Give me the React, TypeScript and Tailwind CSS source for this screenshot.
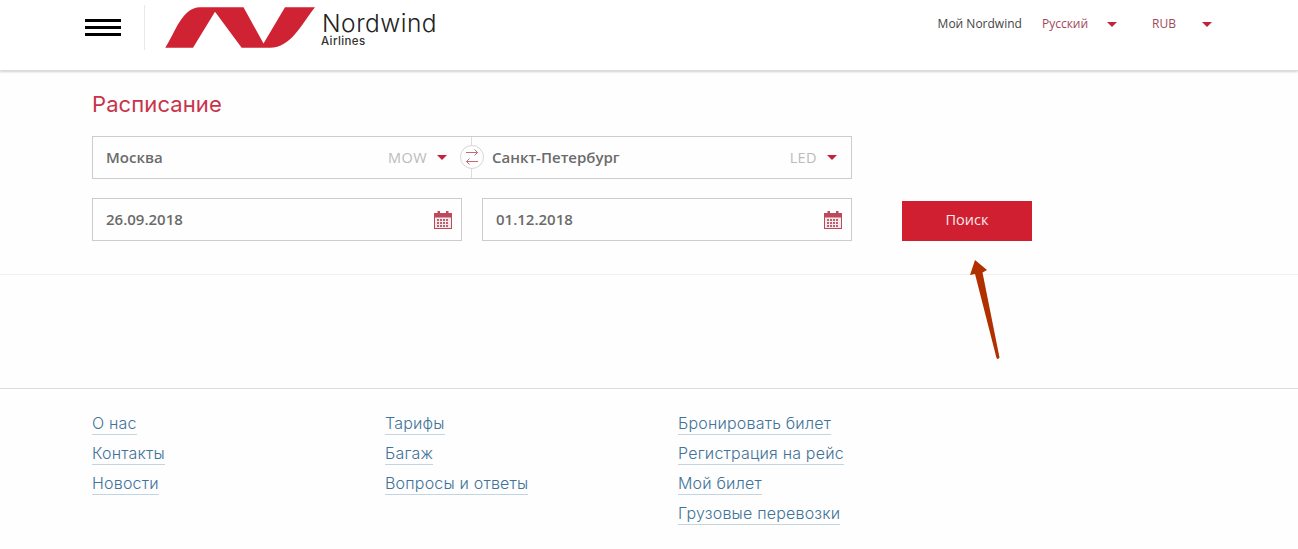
const sans = "font-['Open_Sans',sans-serif]";

function Caret({ className = "" }: { className?: string }) {
  return (
    <svg width="10" height="5" viewBox="0 0 10 5" className={className}>
      <path d="M0 0H10L5 5Z" fill="#c0243a" />
    </svg>
  );
}

function Logo() {
  return (
    <svg width="165" height="55" viewBox="0 0 165 55" className="shrink-0">
      <path
        d="M5.3 47.7C15 33 22 7.3 40 7.3H83.5L103.5 43.5L125 7.3H155C141 25 131 47.7 110 47.7H81.7L55 11.7L33 47.7Z"
        fill="#cf2232"
      />
    </svg>
  );
}

function CalendarIcon() {
  return (
    <svg width="18" height="18" viewBox="0 0 18 18">
      <rect x="0.5" y="2.5" width="17" height="15" fill="#f8eaec" stroke="#bd4a5a" />
      <rect x="0" y="2" width="18" height="4.5" fill="#bd4a5a" />
      <rect x="3.5" y="0" width="2.5" height="4.5" fill="#bd4a5a" />
      <rect x="12" y="0" width="2.5" height="4.5" fill="#bd4a5a" />
      <g fill="#b5636f">
        {[3, 6, 9, 12].map((x) =>
          [8, 11, 14].map((y) => <rect key={`${x}-${y}`} x={x} y={y} width="2" height="2" />)
        )}
      </g>
    </svg>
  );
}

function SwapIcon() {
  return (
    <svg width="14" height="14" viewBox="0 0 14 14" fill="none" strokeWidth="1" className="overflow-visible">
      <path d="M1 2.5H12.5M9.5 -0.5L12.5 2.5L9.5 5.5" stroke="#c46a78" />
      <path d="M13 11.5H1.5M4.5 8.5L1.5 11.5L4.5 14.5" stroke="#c46a78" />
    </svg>
  );
}

function PlaceField({ city, code, className }: { city: string; code: string; className: string }) {
  return (
    <div className={`flex items-center ${className} ${sans}`}>
      <span className="text-[15px] font-semibold text-[#6b6b6b]">{city}</span>
      <span className="ml-auto text-[14.5px] tracking-[0.4px] text-[#bbb]">{code}</span>
      <Caret className="ml-[10px]" />
    </div>
  );
}

function DateField({ value }: { value: string }) {
  return (
    <div className={`w-[370px] h-[43px] border border-[#ccc] flex items-center justify-between pl-[13px] pr-[9px] ${sans}`}>
      <span className="text-[15px] font-semibold text-[#6b6b6b]">{value}</span>
      <CalendarIcon />
    </div>
  );
}

const footerLinks = [
  ["О нас", "Контакты", "Новости"],
  ["Тарифы", "Багаж", "Вопросы и ответы"],
  ["Бронировать билет", "Регистрация на рейс", "Мой билет", "Грузовые перевозки"],
];

export default function App() {
  return (
    <div className="relative h-[549px] overflow-hidden bg-[#fefefe]">
      <header className="h-[71px] flex items-start pl-[85px] pr-[86px] bg-white border-b border-[#ddd] shadow-[0_1px_2px_rgba(0,0,0,0.18)]">
        <div className="mt-[19px] w-[36px] flex flex-col gap-[4px]">
          <div className="h-[3px] bg-black" />
          <div className="h-[3px] bg-black" />
          <div className="h-[3px] bg-black" />
        </div>
        <div className="ml-[23px] mt-[5px] w-px h-[45px] bg-[#e8e8e8]" />
        <div className="ml-[15px]">
          <Logo />
        </div>
        <div className="-ml-[3px] mt-[10px] flex flex-col">
          <span className="font-['Inter',sans-serif] text-[24.5px] leading-[26px] font-light text-[#222] tracking-[0.5px]">Nordwind</span>
          <span className="font-['Inter',sans-serif] text-[11.5px] leading-[10px] font-medium tracking-[0.4px] text-[#333] -ml-px">Airlines</span>
        </div>
        <div className={`ml-auto mt-[15px] h-[18px] flex items-center text-[12px] ${sans}`}>
          <span className="text-[#444]">Мой Nordwind</span>
          <span className="ml-[20px] text-[#a2475a]">Русский</span>
          <Caret className="ml-[19px]" />
          <span className="ml-[35px] text-[#a2475a]">RUB</span>
          <Caret className="ml-[26px]" />
        </div>
      </header>

      <main className="h-[204px] pt-[19px] px-[92px] border-b border-[#f0f0f0]">
        <h1 className="h-[28px] font-['Inter',sans-serif] text-[22px] leading-[28px] font-normal tracking-[0.1px] text-[#c9334a]">Расписание</h1>
        <div className="relative mt-[18px] w-[760px] h-[43px] border border-[#ccc] flex">
          <PlaceField city="Москва" code="MOW" className="w-[378px] shrink-0 pl-[13px] pr-[24px]" />
          <div className="w-px bg-[#ddd]" />
          <PlaceField city="Санкт-Петербург" code="LED" className="flex-1 pl-[20px] pr-[14px]" />
          <div className="absolute left-[367px] top-[8px] w-[24px] h-[24px] rounded-full border border-[#d5d5d5] bg-white flex items-center justify-center">
            <SwapIcon />
          </div>
        </div>
        <div className="mt-[19px] flex items-start">
          <DateField value="26.09.2018" />
          <div className="ml-[20px]">
            <DateField value="01.12.2018" />
          </div>
          <button className={`ml-[50px] mt-[3px] w-[130px] h-[40px] pb-[2px] bg-[#cf1f30] text-[#fbeaec] text-[14.5px] font-medium ${sans}`}>
            Поиск
          </button>
        </div>
      </main>

      <footer className="mt-[113px] border-t border-[#ddd] pt-[19px] pl-[92px] flex font-['Inter',sans-serif]">
        {footerLinks.map((col) => (
          <ul key={col[0]} className="w-[293px] flex flex-col gap-[4px]">
            {col.map((item) => (
              <li key={item} className="h-[26px]">
                <a className="inline-block h-[27px] leading-[30px] text-[16px] font-light tracking-[0.2px] text-[#3f7399] border-b border-[#c5d5e0]">
                  {item}
                </a>
              </li>
            ))}
          </ul>
        ))}
      </footer>

      <svg width="40" height="110" viewBox="0 0 40 110" className="absolute left-[965px] top-[255px]">
        <path d="M10 5L5 20L10 19L31.5 103Q33 105 34.5 102.5L17.5 17.5L22 15Z" fill="#b03000" />
      </svg>
    </div>
  );
}
